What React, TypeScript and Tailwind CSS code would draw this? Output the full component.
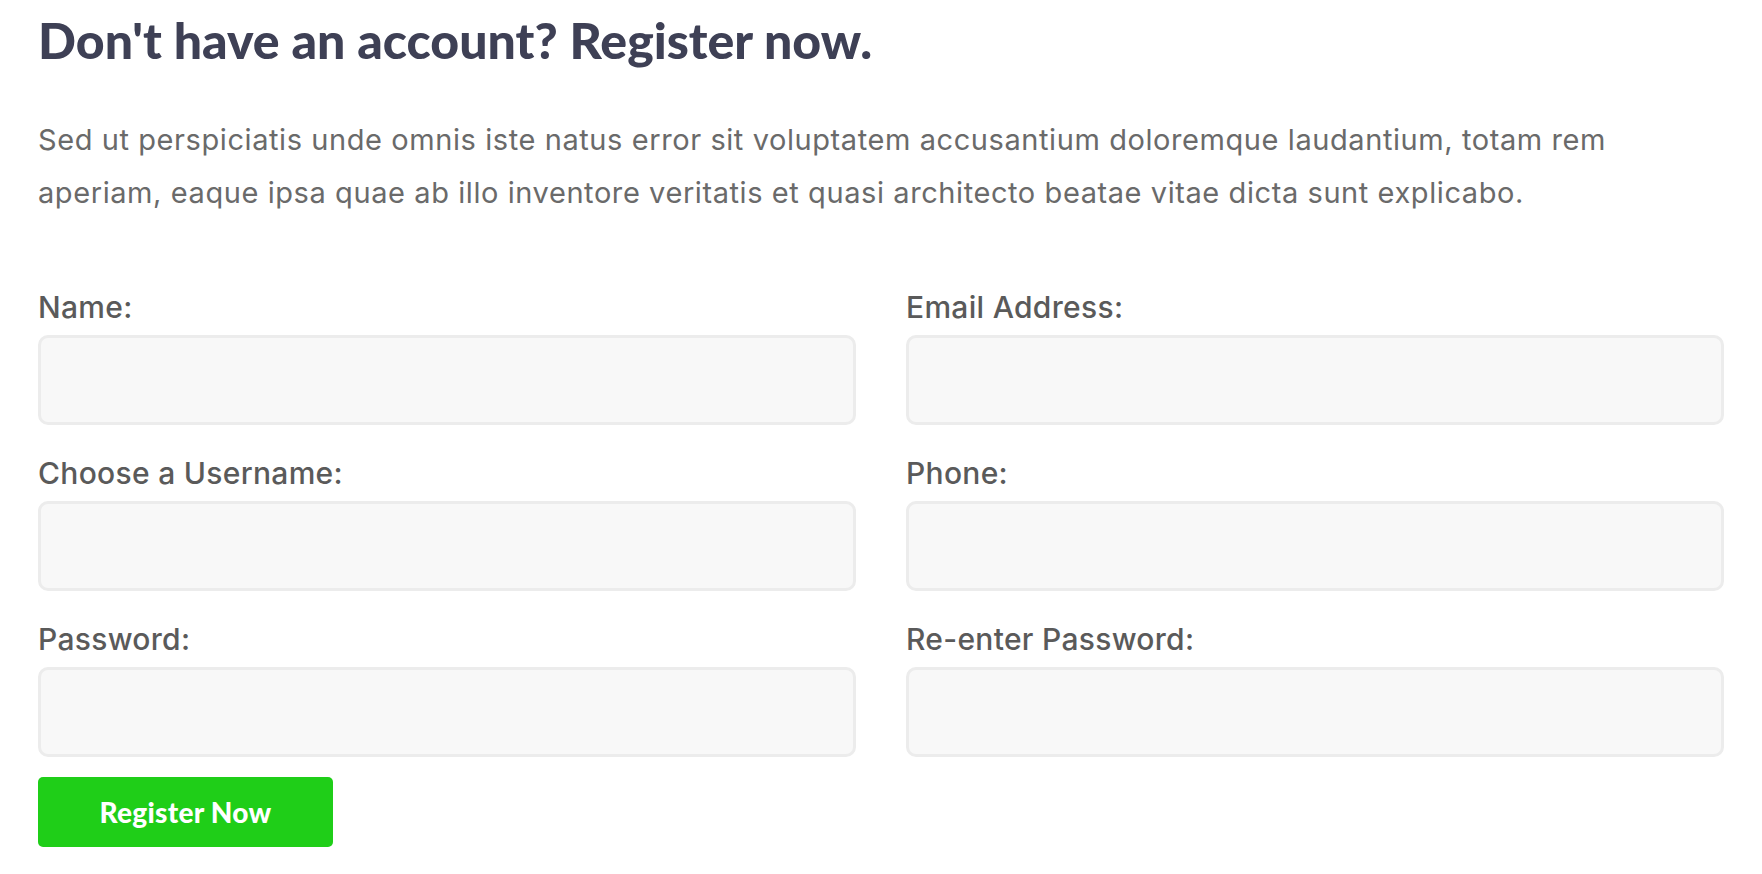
const fields: [string, string][] = [
  ['Name:', 'Email Address:'],
  ['Choose a Username:', 'Phone:'],
  ['Password:', 'Re-enter Password:'],
]

function Field({ label, type = 'text' }: { label: string; type?: string }) {
  return (
    <label className="flex flex-col">
      <span className="text-[30px] leading-[36px] font-medium text-[#5a5a5a] tracking-[0.01em]">{label}</span>
      <input
        type={type}
        className="mt-[10px] h-[90px] w-full rounded-[10px] border-[3px] border-[#ececec] bg-[#f8f8f8] px-4 text-[24px] text-[#444] outline-none"
      />
    </label>
  )
}

export default function App() {
  return (
    <div className="min-h-screen bg-white px-[38px] pt-[10px] pb-6 font-['Inter',sans-serif]">
      <h1 className="font-['Lato',sans-serif] text-[50px] leading-[60px] font-black text-[#3e4055]">
        Don't have an account? Register now.
      </h1>

      <p className="mt-[43px] text-[29px] leading-[53px] text-[#6a6a6a] tracking-[0.02em]">
        Sed ut perspiciatis unde omnis iste natus error sit voluptatem accusantium doloremque laudantium, totam rem
        aperiam, eaque ipsa quae ab illo inventore veritatis et quasi architecto beatae vitae dicta sunt explicabo.
      </p>

      <form className="mt-[70px]" onSubmit={(e) => e.preventDefault()}>
        <div className="grid grid-cols-2 gap-x-[50px] gap-y-[30px]">
          {fields.map(([a, b]) => (
            <>
              <Field key={a} label={a} type={a.includes('Password') ? 'password' : 'text'} />
              <Field key={b} label={b} type={b.includes('Password') ? 'password' : 'text'} />
            </>
          ))}
        </div>
        <button
          type="submit"
          className="mt-[20px] flex h-[70px] w-[295px] items-center justify-center rounded-[5px] bg-[#1fce18] font-['Lato',sans-serif] text-[28px] font-black text-white tracking-[0.01em]"
        >
          Register Now
        </button>
      </form>
    </div>
  )
}
